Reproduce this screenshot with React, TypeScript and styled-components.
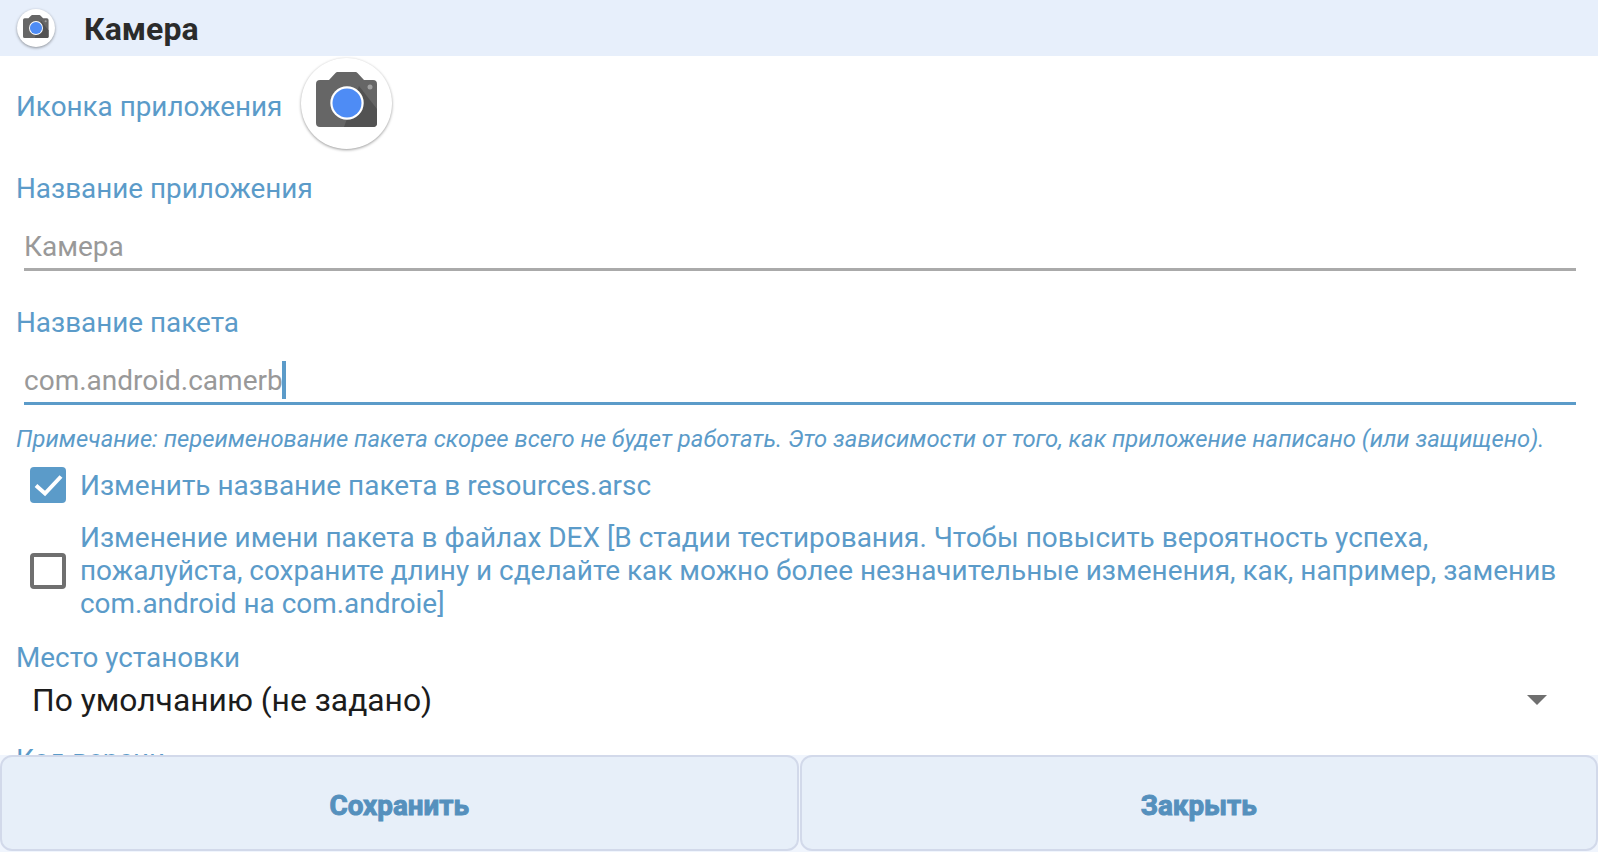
import React from "react";
import styled, { createGlobalStyle } from "styled-components";

const BLUE = "#5b9bc9";

const GlobalStyle = createGlobalStyle`
  html, body {
    margin: 0;
    padding: 0;
    background: #fff;
    font-family: Roboto, "Liberation Sans", sans-serif;
  }
`;

const Page = styled.div`
  width: 1598px;
  height: 852px;
  display: flex;
  flex-direction: column;
  overflow: hidden;
`;

const Header = styled.header`
  height: 56px;
  flex: none;
  display: flex;
  align-items: center;
  padding-left: 17px;
  gap: 29px;
  background: #e7effb;
`;

const Title = styled.h1`
  margin: 2px 0 0;
  font-size: 32px;
  font-weight: 700;
  color: #2b2b2b;
`;

const Content = styled.main`
  flex: 1;
  min-height: 0;
  overflow: hidden;
  padding: 1px 16px 0;
`;

const IconRow = styled.div`
  display: flex;
  align-items: center;
  gap: 19px;
  height: 92px;
`;

const Label = styled.div<{ $top?: number }>`
  font-size: 27.85px;
  line-height: 34px;
  color: ${BLUE};
  margin-top: ${(p) => p.$top ?? 0}px;
`;

const IconCircle = styled.div<{ $size: number }>`
  width: ${(p) => p.$size}px;
  height: ${(p) => p.$size}px;
  flex: none;
  border-radius: 50%;
  background: #fff;
  box-shadow: 0 1px 3px rgba(0, 0, 0, 0.4);
  display: flex;
  align-items: center;
  justify-content: center;
`;

const Field = styled.div<{ $active?: boolean }>`
  box-sizing: content-box;
  margin: 8px 6px 0 8px;
  height: 44px;
  padding-top: 10px;
  display: flex;
  align-items: center;
  font-size: 28px;
  color: #999;
  border-bottom: 3px solid ${(p) => (p.$active ? BLUE : "#aaa")};
`;

const Caret = styled.span`
  width: 4px;
  height: 38px;
  background: ${BLUE};
  margin-left: -1px;
`;

const Note = styled.p`
  margin: 19px 0 0;
  font-size: 23.8px;
  line-height: 30px;
  font-style: italic;
  color: ${BLUE};
  white-space: nowrap;
`;

const CheckRow = styled.div<{ $top: number }>`
  display: flex;
  align-items: center;
  gap: 14px;
  padding-left: 14px;
  margin-top: ${(p) => p.$top}px;
`;

const Box = styled.span<{ $checked?: boolean }>`
  box-sizing: border-box;
  width: 36px;
  height: 36px;
  flex: none;
  border-radius: 4px;
  border: ${(p) => (p.$checked ? "none" : "4px solid #6f6f6f")};
  background: ${(p) => (p.$checked ? BLUE : "#fff")};
  display: flex;
  align-items: center;
  justify-content: center;
`;

const CheckText = styled.span`
  font-size: 27.95px;
  line-height: 33px;
  color: ${BLUE};
`;

const Spinner = styled.div`
  display: flex;
  align-items: center;
  justify-content: space-between;
  height: 50px;
  padding: 0 35px 0 16px;
  font-size: 31.8px;
  color: #1c1c1c;
`;

const Arrow = styled.span`
  width: 0;
  height: 0;
  border-left: 10px solid transparent;
  border-right: 10px solid transparent;
  border-top: 10px solid #6f6f6f;
`;

const Footer = styled.footer`
  height: 97px;
  flex: none;
  display: flex;
  gap: 1px;
  background: #f0f5fd;
`;

const FooterButton = styled.button`
  flex: 1;
  margin: 0;
  padding: 4px 0 0;
  box-sizing: border-box;
  height: 96px;
  background: #e7eff9;
  border: 2px solid #d2d9ea;
  border-radius: 12px;
  font-family: Roboto, "Liberation Sans", sans-serif;
  font-size: 27.8px;
  font-weight: 700;
  color: #5590bd;
  -webkit-text-stroke: 1px #5590bd;
`;

function CameraIcon({ size }: { size: number }) {
  return (
    <svg width={size} height={size} viewBox="0 0 62 62">
      <path
        d="M4 8h9l6.500-7q.8-1 2-1h18q1.200 0 2 1L48 8h9q4 0 4 4v39q0 4-4 4H4q-4 0-4-4V12q0-4 4-4z"
        fill="#666"
      />
      <path d="M43 14L61 37v14q0 4-4 4H28z" fill="#525252" />
      <circle cx="54" cy="15" r="2.500" fill="#a0a0a0" />
      <circle cx="31" cy="31" r="16.700" fill="#fff" />
      <circle cx="31" cy="31" r="14.500" fill="#4e8cf5" />
    </svg>
  );
}

function App() {
  return (
    <>
      <GlobalStyle />
      <Page>
        <Header>
          <IconCircle $size={38}>
            <CameraIcon size={26} />
          </IconCircle>
          <Title>Камера</Title>
        </Header>
        <Content>
          <IconRow>
            <Label $top={7}>Иконка приложения</Label>
            <IconCircle $size={91}>
              <CameraIcon size={62} />
            </IconCircle>
          </IconRow>
          <Label $top={23}>Название приложения</Label>
          <Field>Камера</Field>
          <Label $top={35}>Название пакета</Label>
          <Field $active>
            com.android.camerb
            <Caret />
          </Field>
          <Note>
            Примечание: переименование пакета скорее всего не будет работать. Это зависимости от того, как приложение написано (или защищено).
          </Note>
          <CheckRow $top={13}>
            <Box $checked>
              <svg width="36" height="36" viewBox="0 0 36 36">
                <path d="M6 18.500l9 8L31 9.500" fill="none" stroke="#fff" strokeWidth="4" />
              </svg>
            </Box>
            <CheckText>Изменить название пакета в resources.arsc</CheckText>
          </CheckRow>
          <CheckRow $top={18}>
            <Box />
            <CheckText>
              Изменение имени пакета в файлах DEX [В стадии тестирования. Чтобы повысить вероятность успеха,
              <br />
              пожалуйста, сохраните длину и сделайте как можно более незначительные изменения, как, например, заменив
              <br />
              com.android на com.androie]
            </CheckText>
          </CheckRow>
          <Label $top={21}>Место установки</Label>
          <Spinner>
            По умолчанию (не задано)
            <Arrow />
          </Spinner>
          <Label $top={18}>Код версии</Label>
        </Content>
        <Footer>
          <FooterButton>Сохранить</FooterButton>
          <FooterButton>Закрыть</FooterButton>
        </Footer>
      </Page>
    </>
  );
}

export default App;
